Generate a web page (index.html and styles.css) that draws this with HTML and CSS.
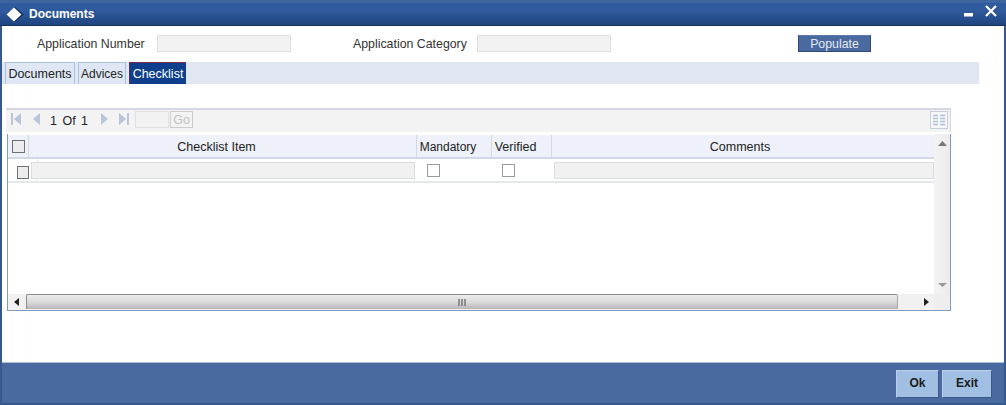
FILE: index.html
```html
<!DOCTYPE html>
<html lang="en">
<head>
<meta charset="utf-8">
<title>Documents</title>
<link rel="stylesheet" href="styles.css">
</head>
<body>
<div class="window">
  <header class="titlebar">
    <span class="title-left">
      <svg class="diamond" width="18" height="15" viewBox="0 0 18 15"><path d="M9 0l8.500 7.500L9 15 .5 7.500z" fill="#0f2a5c"/><path d="M8 0.500l7.500 7L8 14.500 .5 7.500z" fill="#fff"/></svg>
      <span class="title">Documents</span>
    </span>
    <span class="winctl">
      <svg class="minimize" width="9" height="4" viewBox="0 0 9 4"><rect width="9" height="3.500" fill="#fff"/></svg>
      <svg class="close" width="12" height="12" viewBox="0 0 12 12"><path d="M1 1l10 10M11 1L1 11" stroke="#fff" stroke-width="2.200" fill="none"/></svg>
    </span>
  </header>

  <section class="form">
    <label class="lbl lbl-number">Application Number</label>
    <span class="field field-number"></span>
    <label class="lbl lbl-category">Application Category</label>
    <span class="field field-category"></span>
    <span class="populate">Populate</span>
  </section>

  <nav class="tabs">
    <span class="tab tab-documents">Documents</span>
    <span class="tab tab-advices">Advices</span>
    <span class="tab tab-active">Checklist</span>
  </nav>

  <section class="grid">
    <div class="toolbar">
      <svg class="nav nav-first" width="11" height="12" viewBox="0 0 11 12"><rect x="0" y="0" width="2" height="12" fill="#b9c5da"/><path d="M10 0v12L3 6z" fill="#b9c5da"/></svg>
      <svg class="nav nav-prev" width="7" height="12" viewBox="0 0 7 12"><path d="M7 0v12L0 6z" fill="#b9c5da"/></svg>
      <span class="pager">1 Of 1</span>
      <svg class="nav nav-next" width="7" height="12" viewBox="0 0 7 12"><path d="M0 0v12l7-6z" fill="#b9c5da"/></svg>
      <svg class="nav nav-last" width="11" height="12" viewBox="0 0 11 12"><path d="M0 0v12l7-6z" fill="#b9c5da"/><rect x="8" y="0" width="2" height="12" fill="#b9c5da"/></svg>
      <span class="pageinput"></span>
      <span class="go">Go</span>
      <svg class="viewicon" width="18" height="18" viewBox="0 0 18 18"><rect x=".5" y=".5" width="17" height="17" fill="#f5f6f8" stroke="#c6cede"/><path d="M3 4.500h5M10 4.500h5M3 7.500h5M10 7.500h5M3 10.500h5M10 10.500h5M3 13.500h5M10 13.500h5" stroke="#b5c0d6" stroke-width="1.400"/></svg>
    </div>

    <div class="tablebox">
      <div class="tablemain">
        <div class="viewport">
          <div class="row head">
            <div class="cell cell-check"><span class="check check-grey"></span></div>
            <div class="cell cell-text">Checklist Item</div>
            <div class="cell cell-text cell-mandatory">Mandatory</div>
            <div class="cell cell-text">Verified</div>
            <div class="cell cell-last">Comments</div>
          </div>
          <div class="row body">
            <div class="cell-select"><span class="check check-grey"></span></div>
            <div class="cell-input"><span class="input input-item"></span></div>
            <div class="cell-box"><span class="check"></span></div>
            <div class="cell-box"><span class="check"></span></div>
            <div class="cell-input"><span class="input input-comment"></span></div>
          </div>
        </div>
        <div class="vscroll">
          <svg width="9" height="6" viewBox="0 0 9 6"><path d="M4.500 0L9 5H0z" fill="#777"/></svg>
          <svg width="9" height="5" viewBox="0 0 9 5"><path d="M0 0h9L4.500 4z" fill="#999"/></svg>
        </div>
      </div>
      <div class="hscroll">
        <svg class="arrow" width="5" height="8" viewBox="0 0 5 8"><path d="M5 0v8L0 4z" fill="#222"/></svg>
        <div class="thumb">
          <svg width="8" height="7" viewBox="0 0 8 7"><path d="M1 0v7M4 0v7M7 0v7" stroke="#777" stroke-width="1.500"/></svg>
        </div>
        <svg class="arrow" width="5" height="8" viewBox="0 0 5 8"><path d="M0 0v8l5-4z" fill="#222"/></svg>
        <span class="corner"></span>
      </div>
    </div>
  </section>

  <footer class="footer">
    <span class="btn btn-ok">Ok</span>
    <span class="btn btn-exit">Exit</span>
  </footer>
</div>
</body>
</html>
```
FILE: styles.css
```css
* { box-sizing: border-box; }
html, body { margin: 0; padding: 0; }
body {
  width: 1006px;
  height: 405px;
  overflow: hidden;
  font-family: "Liberation Sans", Arial, sans-serif;
  font-size: 12.5px;
  color: #222;
  background: #fff;
}
.window {
  width: 1006px;
  height: 405px;
  display: flex;
  flex-direction: column;
  border-left: 2px solid #35588f;
  border-right: 2px solid #35588f;
  border-bottom: 2px solid #35588f;
  background: #fff;
}
.titlebar {
  height: 26px;
  flex: none;
  display: flex;
  align-items: center;
  justify-content: space-between;
  margin: 0 -2px;
  padding: 0 9px 0 6px;
  background: linear-gradient(#2f5a9e 0, #2f5a9e 35%, #1f4480 100%);
  border-top: 3px solid #3d659e;
  border-bottom: 1px solid #14305f;
}
.title-left { display: flex; align-items: center; gap: 5px; }
.diamond { display: block; }
.title { color: #fff; font-weight: bold; font-size: 12px; }
.winctl { display: flex; align-items: flex-start; gap: 12px; margin-top: -7px; }
.minimize { margin-top: 8px; }

.form {
  height: 36px;
  flex: none;
  display: flex;
  align-items: center;
}
.lbl { color: #333; font-size: 12.35px; white-space: nowrap; }
.lbl-number { margin-left: 35px; width: 120px; }
.lbl-category { margin-left: 62px; width: 124px; }
.field {
  height: 17px;
  margin-top: -1px;
  background: #f2f2f2;
  border: 1px solid #e0e0e0;
}
.field-number { width: 134px; }
.field-category { width: 134px; }
.populate {
  margin-left: 187px;
  width: 73px;
  height: 17px;
  margin-top: -2px;
  background: #4a699f;
  border: 1px solid #2f4a78;
  border-top-color: #5b7ab0;
  color: #e4e9f2;
  text-align: center;
  line-height: 17px;
  font-size: 12.35px;
}

.tabs {
  width: 977px;
  height: 22px;
  flex: none;
  display: flex;
  gap: 3px;
  padding-left: 3px;
  background: #e0e7f3;
}
.tab {
  height: 22px;
  line-height: 22px;
  text-align: center;
  font-size: 12.5px;
  color: #222;
  background: #dfe7f4;
  border: 1px solid #a9c0df;
  border-bottom: none;
}
.tab-documents { width: 70px; }
.tab-advices { width: 48px; font-size: 12px; }
.tab-active {
  width: 57px;
  color: #fff;
  background: #0f3f8c;
  border: none;
  border-top: 1px solid #7a2a4a;
  border-left: 1px solid #5a2a5a;
}

.grid {
  width: 945px;
  margin: 24px 0 0 4px;
  flex: none;
}
.toolbar {
  height: 24px;
  display: flex;
  align-items: center;
  background: #f3f3f3;
  border-top: 2px solid #d3d8e0;
  border-right: 1px solid #d3d8e0;
  padding: 0 0 3px 5px;
}
.nav { display: block; flex: none; margin-top: -1px; }
.nav-prev { margin-left: 11px; }
.pager { margin-left: 10px; margin-top: 2px; width: 40px; font-size: 12.5px; color: #222; word-spacing: 2px; white-space: nowrap; }
.nav-next { margin-left: 11px; }
.nav-last { margin-left: 11px; }
.pageinput {
  width: 34px;
  height: 17px;
  margin-left: 5px;
  background: #f2f2f2;
  border: 1px solid #e0e0e0;
}
.go {
  width: 23px;
  height: 17px;
  margin-left: 1px;
  border: 1px solid #ccc;
  color: #c2c2c2;
  background: #f3f3f3;
  text-align: center;
  line-height: 16px;
  font-size: 12.5px;
}
.viewicon { margin-left: auto; margin-right: 2px; display: block; }

.tablebox {
  margin: 2px 0 0 1px;
  height: 177px;
  border: 1px solid #7f9cc0;
  border-top: none;
  display: flex;
  flex-direction: column;
}
.tablemain { flex: 1; min-height: 0; display: flex; }
.viewport { flex: 1; min-width: 0; overflow: hidden; }
.row {
  display: grid;
  grid-template-columns: 21px 388px 75px 60px 382px;
}
.head {
  height: 24px;
  background: #eef1f9;
  border-bottom: 2px solid #d3d8e6;
  margin-top: 1px;
}
.cell {
  display: flex;
  align-items: center;
  justify-content: center;
  font-size: 12.5px;
  color: #222;
  border-right: 1px solid #d3d8e6;
  white-space: nowrap;
}
.cell-text { padding: 2px 12px 0 0; }
.cell-mandatory { font-size: 12px; }
.cell-last { border-right: none; padding: 2px 6px 0 0; }
.check {
  display: block;
  width: 13px;
  height: 13px;
  background: #fff;
  border: 1px solid #9a9a9a;
}
.check-grey { background: #ececec; border-color: #707070; }
.body {
  height: 24px;
  border-bottom: 2px solid #e4e7ef;
  align-items: center;
}
.cell-select { position: relative; display: flex; padding: 5px 0 0 9px; }
.cell-select::after {
  content: "";
  position: absolute;
  left: 29px;
  top: -2px;
  width: 1px;
  height: 24px;
  background: #e8ebf2;
}
.cell-input { position: relative; display: flex; align-items: center; }
.cell-box { display: flex; justify-content: flex-start; padding-left: 10px; }
.input {
  display: block;
  height: 17px;
  background: #f1f1f1;
  border: 1px solid #dcdcdc;
}
.input-item { width: 384px; margin-left: 2px; }
.input-comment { width: 380px; margin-left: 2px; }
.vscroll {
  width: 16px;
  flex: none;
  background: linear-gradient(90deg, #f3f3f3, #ececec);
  display: flex;
  flex-direction: column;
  justify-content: space-between;
  align-items: center;
  padding: 7px 0 6px;
}
.hscroll {
  height: 16px;
  flex: none;
  display: flex;
  align-items: center;
  background: #f1f1f1;
}
.arrow { display: block; flex: none; margin-left: 6px; }
.thumb {
  width: 872px;
  height: 15px;
  margin-left: 7px;
  align-self: flex-start;
  display: flex;
  align-items: center;
  justify-content: center;
  border: 1px solid #8c8c8c;
  border-right-color: #a8a8a8;
  border-bottom: none;
  background: linear-gradient(#ececec, #d9d9d9 55%, #b6b6b8);
  border-radius: 2px 2px 0 0;
}
.hscroll .thumb + .arrow { margin-left: 26px; }
.corner { margin-left: auto; width: 16px; height: 16px; background: #eeeeee; }

.footer {
  margin-top: auto;
  height: 41px;
  flex: none;
  display: flex;
  padding: 7px 0 0 894px;
  gap: 3px;
  background: #4a699f;
  border-top: 1px solid #a9c0df;
}
.btn {
  height: 28px;
  background: #a1bfe3;
  border: 1px solid #3b5a8c;
  border-top-color: #b9cfea;
  border-left-color: #b9cfea;
  color: #1a1a1a;
  font-weight: bold;
  font-size: 12px;
  line-height: 25px;
  text-align: center;
}
.btn-ok { width: 43px; }
.btn-exit { width: 50px; }
```
